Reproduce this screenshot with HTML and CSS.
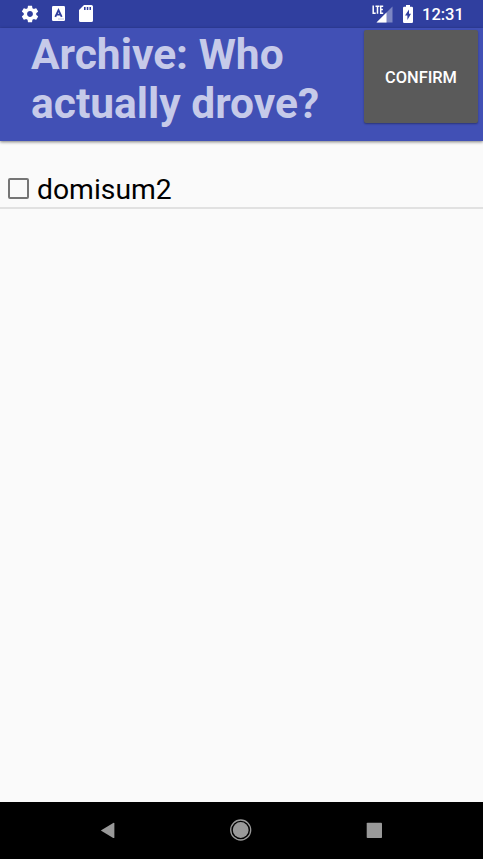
FILE: index.html
```html
<!DOCTYPE html>
<html lang="en">
<head>
<meta charset="utf-8">
<title>Archive</title>
<link rel="stylesheet" href="styles.css">
</head>
<body>
<div class="screen">
  <div class="status">
    <svg class="gear" width="20" height="20" viewBox="0 0 24 24"><path d="M19.43 12.98c.04-.32.07-.64.07-.98s-.03-.66-.07-.98l2.11-1.65c.19-.15.24-.42.12-.64l-2-3.46c-.12-.22-.39-.3-.61-.22l-2.49 1c-.52-.4-1.08-.73-1.69-.98l-.38-2.65C14.46 2.18 14.25 2 14 2h-4c-.25 0-.46.18-.49.42l-.38 2.65c-.61.25-1.17.59-1.69.98l-2.49-1c-.23-.09-.49 0-.61.22l-2 3.46c-.13.22-.07.49.12.64l2.11 1.65c-.04.32-.07.65-.07.98s.03.66.07.98l-2.11 1.65c-.19.15-.24.42-.12.64l2 3.46c.12.22.39.3.61.22l2.49-1c.52.4 1.08.73 1.69.98l.38 2.65c.03.24.24.42.49.42h4c.25 0 .46-.18.49-.42l.38-2.65c.61-.25 1.17-.59 1.69-.98l2.49 1c.23.09.49 0 .61-.22l2-3.46c.12-.22.07-.49-.12-.64l-2.11-1.65zM12 15.5c-1.93 0-3.5-1.57-3.5-3.5s1.57-3.5 3.5-3.5 3.5 1.57 3.5 3.5-1.57 3.5-3.5 3.5z"/></svg>
    <svg class="keyboard" width="13" height="15" viewBox="0 0 13 15"><rect width="13" height="15" rx="1.2"/><path class="ink" d="M3.3 10.8 6.5 4.1l3.2 6.7M4.6 8.7h3.8"/><path class="dots" d="M6.5 13h5"/></svg>
    <svg class="card" width="14" height="17" viewBox="0 0 14 17"><path fill-rule="evenodd" d="M5 0h7.4Q14 0 14 1.6v13.8Q14 17 12.4 17H1.6Q0 17 0 15.4V5zM5 2v3h1.6V2zm2.8 0v3h1.5V2zm2.7 0v3H12V2z"/></svg>
    <span class="spacer"></span>
    <svg class="signal" width="21" height="18" viewBox="0 0 21 18"><path class="faint" d="M20.5 1.5V17.5H4.5z"/><path d="M14.5 7.5v10h-10z"/><path class="lte" d="M1.2 .5v7.7h2.5M3.5 1.2h4M5.5 1.2v7.6M11.2 1.2H8.7v7h2.5M8.7 4.6h2.2"/></svg>
    <svg class="battery" width="10" height="18" viewBox="0 0 10 18"><path fill-rule="evenodd" d="M3 0h4v1.7h1.8Q10 1.7 10 2.9v13.8Q10 18 8.8 18H1.2Q0 18 0 16.7V2.9Q0 1.7 1.2 1.7H3zM6 4.5 2 10.5h2.4v4.4L8 8.8H6z"/></svg>
    <span class="clock">12:31</span>
  </div>
  <header class="bar">
    <h1 class="title">Archive: Who<br>actually drove?</h1>
    <button class="confirm">CONFIRM</button>
  </header>
  <main class="list">
    <label class="row"><span class="box"></span><span class="name">domisum2</span></label>
  </main>
  <nav class="nav">
    <svg width="483" height="57" viewBox="0 0 483 57"><path d="M100.8 28.4 113.2 20.9q1.2-.5 1.2.7v13.6q0 1.2-1.2.7z"/><circle class="ring" cx="240.7" cy="28" r="10"/><circle cx="240.7" cy="28" r="7.9"/><rect x="366.7" y="20.8" width="15.3" height="15.3" rx=".8"/></svg>
  </nav>
</div>
</body>
</html>
```
FILE: styles.css
```css
* { box-sizing: border-box; }
body { margin: 0; font-family: Roboto, "Liberation Sans", sans-serif; }
.screen { width: 483px; height: 859px; display: flex; flex-direction: column; background: #fafafa; overflow: hidden; }
.status { height: 28px; flex: none; display: flex; align-items: center; padding: 0 19px 1px 20px; background: #303f9f; color: #fff; }
.status svg { fill: #fff; flex: none; }
.keyboard { margin-left: 12px; }
.status .ink { fill: none; stroke: #303f9f; stroke-width: 1.8; }
.status .dots { fill: none; stroke: #303f9f; stroke-width: 1; stroke-dasharray: 1 1; opacity: .6; }
.card { margin-left: 14px; }
.spacer { flex: 1; }
.status .faint { fill: #7c86c3; }
.status .lte { fill: none; stroke: #fff; stroke-width: 1.5; }
.battery { margin-left: 10px; }
.clock { margin-left: 9px; width: 42px; padding-top: 3px; font-size: 16.5px; line-height: 28px; font-weight: 500; white-space: nowrap; }
.bar { height: 113px; flex: none; display: flex; justify-content: space-between; align-items: flex-start; padding: 2px 5px 0 31px; background: #4150b5; box-shadow: 0 1px 3px rgba(0,0,0,.5); }
.title { margin: 0; font-size: 42.5px; line-height: 49px; font-weight: 700; color: #c6cae9; white-space: nowrap; }
.confirm { width: 114px; height: 93px; margin: 0; padding: 2px 0 0; border: 0; border-radius: 2px; background: #5a5a5a; color: #fff; font: 500 16.4px Roboto, sans-serif; box-shadow: 0 1px 2px rgba(0,0,0,.35); }
.list { flex: 1; padding-top: 29px; }
.row { height: 39px; display: flex; align-items: center; padding-left: 8px; border-bottom: 2px solid #e1e1e1; }
.box { width: 21px; height: 21px; border: 2px solid #757575; border-radius: 2px; }
.name { margin-left: 8px; padding-top: 2px; font-size: 28.3px; line-height: 34px; color: #000; }
.nav { height: 57px; flex: none; background: #000; }
.nav svg { display: block; fill: #999; }
.nav .ring { fill: none; stroke: #999; stroke-width: 1.3; }
```
